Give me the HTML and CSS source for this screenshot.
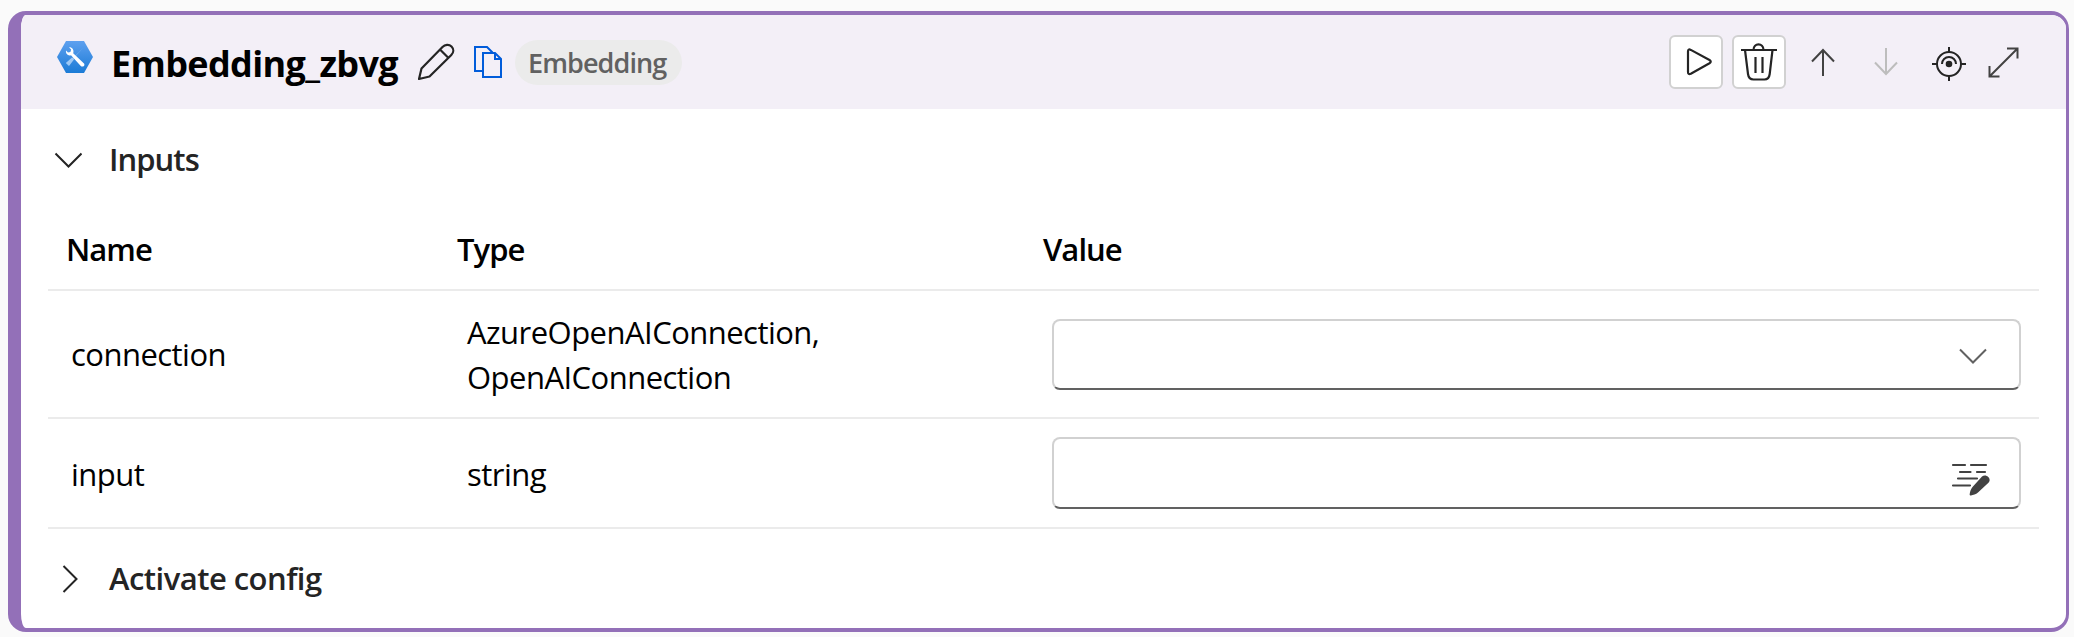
FILE: index.html
```html
<!DOCTYPE html>
<html lang="en">
<head>
<meta charset="utf-8">
<title>Embedding_zbvg</title>
<link rel="stylesheet" href="styles.css">
</head>
<body>
<section class="node">
  <header class="head">
    <svg class="logo" width="36" height="32" viewBox="0 0 36 32">
      <defs><linearGradient id="hex" x1="0" y1="0" x2="0" y2="1"><stop offset="0" stop-color="#5ea0ef"/><stop offset="1" stop-color="#1b7bd6"/></linearGradient></defs>
      <path d="M9 0H27L36 16L27 32H9L0 16Z" fill="url(#hex)"/>
      <path d="M26.6 6.4L16.5 17.2L17 18.5L12 25L8.8 22L15 16.5L16 17Z" fill="#9cc8f5"/>
      <path d="M9 9.5C8.5 13 11 15 14 14.2L24 25.2C26 26.6 28.4 24.2 27 22.4L16.2 12.2C17.4 8.8 15 6 12 6.3L14.2 8.6L13.4 11L11 11.6Z" fill="#fff"/>
    </svg>
    <h1 class="title">Embedding_zbvg</h1>
    <svg class="pencil" width="38" height="38" viewBox="0 0 38 38" fill="none" stroke="#242424" stroke-width="2.2" stroke-linejoin="round">
      <path d="M2 36L4.5 25.5L25.5 4C28 1.400 32 1 34.500 3.500C37 6 36.800 9.500 34.300 12L12.500 33.500Z M23 6.500L31.500 15"/>
    </svg>
    <svg class="copy" width="30" height="34" viewBox="0 0 30 34" fill="none" stroke="#015cda" stroke-width="2">
      <path d="M9 26H2V2H14L19.500 7.500M10 8H22L28 14V32H10ZM22 8V14H28"/>
    </svg>
    <span class="tag">Embedding</span>
    <div class="tools">
      <button class="btn"><svg width="54" height="54" viewBox="0 0 54 54" fill="none" stroke="#242424" stroke-width="2.200" stroke-linejoin="round"><path d="M19 16.500Q19 13.500 21.800 14.900L40.500 25Q43 26.700 40.500 28.300L21.800 38.700Q19 40 19 37Z"/></svg></button>
      <button class="btn"><svg width="54" height="54" viewBox="0 0 54 54" fill="none" stroke="#242424" stroke-width="2.200"><path d="M9 15H45M21.500 15C21.500 7.500 31.500 7.500 31.500 15M13 15L16 39Q16.700 44.500 21.500 44.500H32.500Q37 44.500 37.700 39L40.500 15M23.500 22V38M30.500 22V38"/></svg></button>
      <svg class="up" width="24" height="28" viewBox="0 0 24 28" fill="none" stroke="#424242" stroke-width="2"><path d="M12 28V2M1 13.500L12 2L23 13.500"/></svg>
      <svg class="down" width="24" height="28" viewBox="0 0 24 28" fill="none" stroke="#bdbdbd" stroke-width="2"><path d="M12 0V26M1 14.500L12 26L23 14.500"/></svg>
      <svg class="target" width="34" height="34" viewBox="0 0 34 34" fill="none" stroke="#242424" stroke-width="2"><circle cx="17" cy="17" r="12"/><path d="M17 0V5M17 29V34M0 17H5M29 17H34M10 17A7 7 0 0 1 24 17"/><circle cx="17" cy="17" r="3.300" fill="#242424" stroke="none"/></svg>
      <svg class="expand" width="31" height="31" viewBox="0 0 31 31" fill="none" stroke="#424242" stroke-width="2"><path d="M1.500 29.500L29.500 1.500M19 1.500H29.500V11.500M1.500 19V29.500H11.500"/></svg>
    </div>
  </header>
  <div class="body">
    <div class="fold fold-open">
      <svg class="fold-icon" width="28" height="28" viewBox="0 0 28 28" fill="none" stroke="#242424" stroke-width="2"><path d="M1.500 7.500L14.500 20.500L27.500 7.500"/></svg>
      <h2 class="fold-title tight">Inputs</h2>
    </div>
    <div class="table">
      <div class="row row-head tight"><span>Name</span><span>Type</span><span>Value</span></div>
      <div class="row row-conn">
        <span>connection</span>
        <span>AzureOpenAIConnection,<br>OpenAIConnection</span>
        <div class="field"><svg class="chev" width="28" height="16" viewBox="0 0 28 16" fill="none" stroke="#616161" stroke-width="2"><path d="M1 1.500L14 14.500L27 1.500"/></svg></div>
      </div>
      <div class="row row-input">
        <span class="low">input</span>
        <span class="low">string</span>
        <div class="field"><svg class="edit" width="40" height="34" viewBox="0 0 40 34" fill="none" stroke="#424242" stroke-width="2.200" stroke-linecap="round"><path d="M2 3H14M20 3H35M9 10H19.500M26 10H34M7 16.500H26M2 23.500H19"/><path d="M31 14.500C35 11 41 16.500 37.700 20.500L27 30.500C25 32.300 22 33 20 33.500C19 33.500 18.500 33 18.700 32C19 30 19.700 27 21.500 25Z" fill="#424242" stroke="none"/></svg></div>
      </div>
    </div>
    <div class="fold fold-closed">
      <svg class="fold-icon" width="28" height="28" viewBox="0 0 28 28" fill="none" stroke="#242424" stroke-width="2"><path d="M9.500 1L22.500 14L9.500 27"/></svg>
      <h2 class="fold-title">Activate config</h2>
    </div>
  </div>
</section>
</body>
</html>
```

FILE: styles.css
```css
* { box-sizing: border-box; }
body {
  margin: 0;
  padding: 11px 5px 5px 8px;
  height: 637px;
  overflow: hidden;
  background: #fafafa;
  font-family: "Open Sans", "Noto Sans", sans-serif;
  font-size: 31px;
  line-height: 45px;
  letter-spacing: -0.53px;
  color: #000;
  white-space: nowrap;
}
h1, h2 { margin: 0; }
svg { display: block; flex: none; }
.node {
  height: 621px;
  border: 4px solid #9370b8;
  border-left-width: 13px;
  border-right-width: 3px;
  border-radius: 18px;
  background: #fff;
  overflow: hidden;
}
.head {
  display: flex;
  align-items: flex-start;
  height: 94px;
  padding-left: 36px;
  background: #f3eff7;
}
.logo { margin-top: 26px; }
.title {
  width: 306px;
  margin: 26px 0 0 18px;
  font-size: 36px;
  font-weight: 700;
  letter-spacing: -0.65px;
}
.pencil { margin-top: 28px; }
.copy { margin: 30px 0 0 18px; }
.tag {
  width: 167px;
  height: 45px;
  margin: 25px 0 0 12px;
  padding-left: 13px;
  border-radius: 23px;
  background: #ebebeb;
  color: #616161;
  font-size: 27px;
  font-weight: 600;
  line-height: 45px;
  letter-spacing: -0.9px;
}
.tools {
  display: flex;
  align-items: flex-start;
  margin: 20px 47px 0 auto;
}
.btn {
  width: 54px;
  height: 54px;
  margin-right: 9px;
  padding: 0;
  border: 2px solid #d1d1d1;
  border-radius: 6px;
  background: #fff;
}
.btn svg { margin: -2px; }
.up { margin: 13px 0 0 16px; }
.down { margin: 13px 0 0 39px; }
.target { margin: 12px 0 0 34px; }
.expand { margin: 12px 0 0 22px; }
.fold { display: flex; align-items: center; padding-left: 33px; }
.fold-open { height: 102px; }
.fold-closed { height: 99px; padding-top: 1px; }
.fold-icon { margin-right: 27px; }
.fold-title {
  padding-bottom: 2px;
  color: #242424;
  font-size: 31px;
  font-weight: 600;
}
.tight { letter-spacing: -0.95px; }
.table { margin: 0 27px; }
.row {
  display: grid;
  grid-template-columns: 396px 585px 969px;
  align-items: center;
  border-bottom: 2px solid #ebebeb;
}
.row-head {
  grid-template-columns: 391px 586px auto;
  height: 80px;
  padding: 0 0 2px 18px;
  font-weight: 600;
}
.row-conn { height: 128px; padding: 1px 0 0 23px; }
.row-input { height: 110px; padding-left: 23px; }
.low { padding-top: 2px; }
.field {
  display: flex;
  align-items: center;
  justify-content: flex-end;
  height: 72px;
  border: 2px solid #d1d1d1;
  border-bottom-color: #616161;
  border-radius: 8px;
}
.row-conn .field { height: 71px; }
.chev { margin: 2px 32px 0 0; }
.edit { margin: 12px 28px 0 0; }
```
